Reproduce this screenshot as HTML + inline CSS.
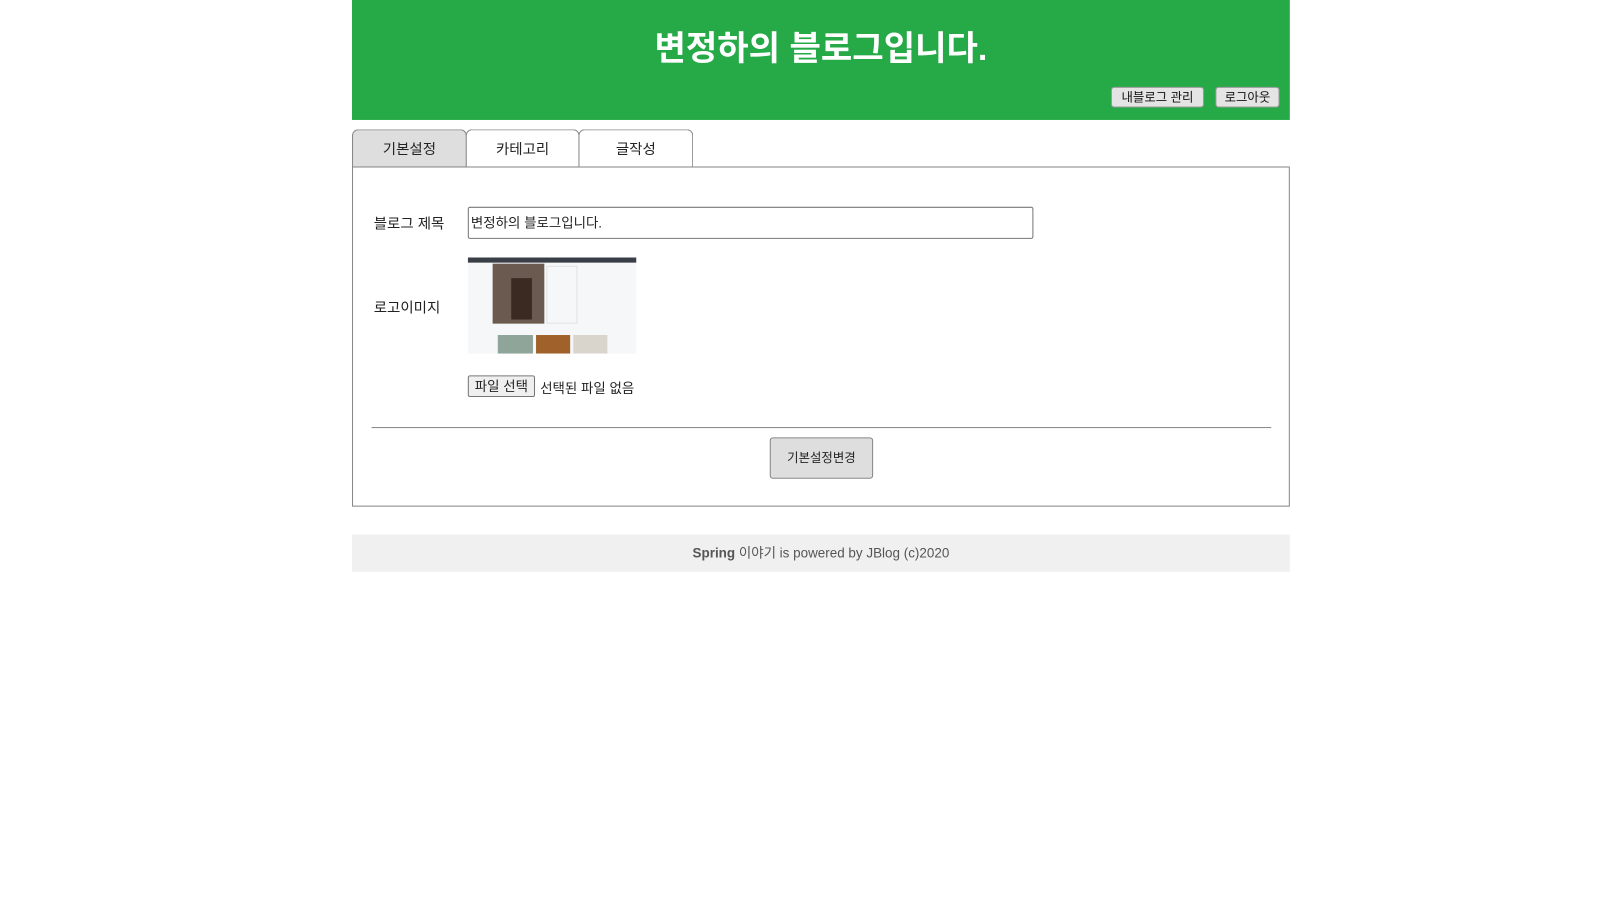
<!DOCTYPE html>
<html><head><meta charset="utf-8">
<style>
*{box-sizing:border-box}
body{margin:0;background:#fff;font-family:"Liberation Sans","Noto Sans CJK KR",sans-serif;font-size:13px;color:#222}
.wrap{position:absolute;left:352px;width:907px;top:0;transform:scale(1.034);transform-origin:0 0}
.hd{height:116px;background:#26aa48;position:relative}
.hd h1{margin:0;position:absolute;top:26px;left:0;right:0;text-align:center;color:#fff;font-size:33px;font-weight:bold;line-height:42px}
.btn{position:absolute;top:84px;height:20px;background:#e4e4e4;border:1px solid #999;border-radius:3px;font-size:12px;line-height:18px;text-align:center;color:#111}
.tab{position:absolute;top:125px;height:37px;border:1px solid #888;border-bottom:none;border-radius:6px 6px 0 0;text-align:center;line-height:36px;font-size:14px;background:#fff}
.box{position:absolute;top:161px;left:0;width:907px;height:329px;border:1px solid #888}
.lbl{position:absolute;font-size:14px}
.inp{position:absolute;left:111px;top:38px;width:547px;height:31px;border:1px solid #777;border-radius:2px;font-size:13px;line-height:29px;padding-left:2px}
.img{position:absolute;left:111px;top:87px;width:163px;height:93px;background:#f6f7f9;overflow:hidden}
.ft{position:absolute;top:517px;left:0;width:907px;height:36px;background:#f0f0f0;text-align:center;line-height:36px;font-size:13px;color:#555}
</style></head><body>
<div class="wrap">
 <div class="hd"><h1>변정하의 블로그입니다.</h1>
  <div class="btn" style="left:734px;width:90px">내블로그 관리</div>
  <div class="btn" style="left:835px;width:62px">로그아웃</div>
 </div>
 <div class="tab" style="left:0;width:111px;background:#dedede">기본설정</div>
 <div class="tab" style="left:110px;width:110px">카테고리</div>
 <div class="tab" style="left:219px;width:111px">글작성</div>
 <div class="box">
  <div class="lbl" style="left:20px;top:44px">블로그 제목</div>
  <div class="inp">변정하의 블로그입니다.</div>
  <div class="lbl" style="left:20px;top:125px">로고이미지</div>
  <div class="img">
   <div style="position:absolute;left:0;top:0;width:163px;height:5px;background:#3a3f47"></div>
   <div style="position:absolute;left:24px;top:6px;width:50px;height:58px;background:#6b5a50"></div>
   <div style="position:absolute;left:42px;top:20px;width:20px;height:40px;background:#3a2a22"></div>
   <div style="position:absolute;left:76px;top:8px;width:30px;height:56px;border:1px solid #e2e2e2"></div>
   <div style="position:absolute;left:29px;top:75px;width:34px;height:18px;background:#8fa59a"></div>
   <div style="position:absolute;left:66px;top:75px;width:33px;height:18px;background:#a0622a"></div>
   <div style="position:absolute;left:102px;top:75px;width:33px;height:18px;background:#d9d4cc"></div>
  </div>
  <div style="position:absolute;left:111px;top:201px;width:65px;height:21px;border:1px solid #777;border-radius:2px;background:#efefef;font-size:13px;line-height:19px;text-align:center">파일 선택</div>
  <div class="lbl" style="left:181px;top:203px;font-size:13px">선택된 파일 없음</div>
  <div style="position:absolute;left:18px;top:251px;width:870px;height:1px;background:#888"></div>
  <div style="position:absolute;left:403px;top:261px;width:100px;height:40px;border:1px solid #888;border-radius:3px;background:#dedede;text-align:center;line-height:38px;font-size:12px">기본설정변경</div>
 </div>
 <div class="ft"><b>Spring</b> 이야기 is powered by JBlog (c)2020</div>
</div>
</body></html>
